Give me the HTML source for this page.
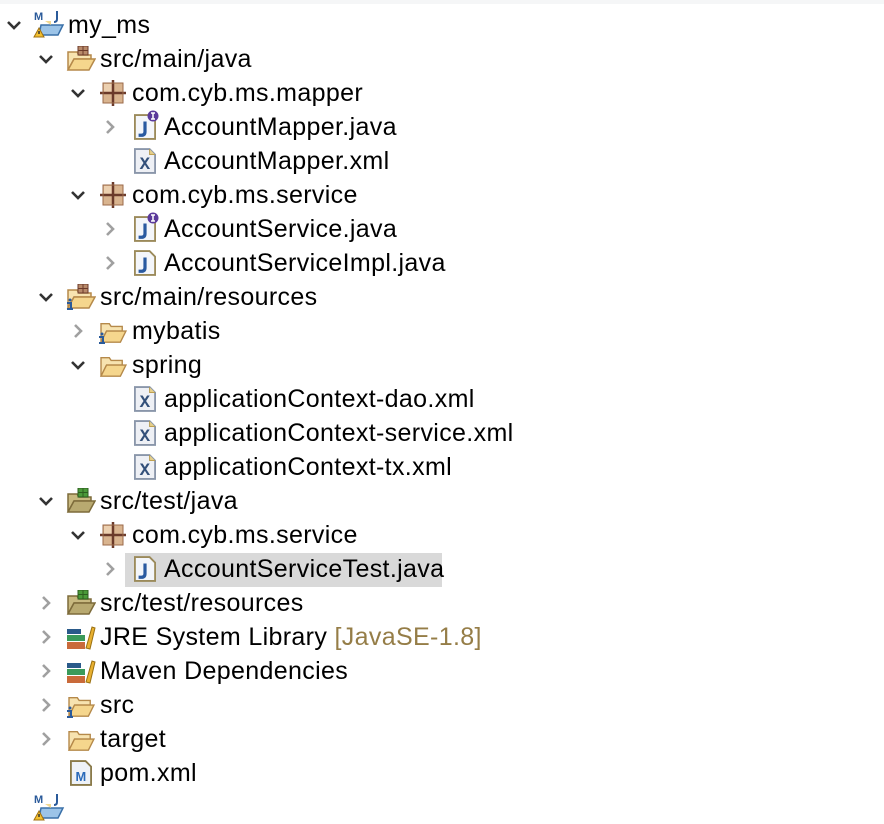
<!DOCTYPE html><html><head><style>
body{margin:0;width:884px;height:803px;background:#fff;position:relative;overflow:hidden;font-family:"Liberation Sans","DejaVu Sans",sans-serif;font-size:25px;letter-spacing:0.35px;color:#000}
.r{position:absolute;height:34px;line-height:34px;white-space:nowrap}
svg.i{position:absolute}
.g{color:#957d47}
</style></head><body>
<div style="position:absolute;left:0;top:0;width:884px;height:4px;background:#f5f6f7"></div>
<div style="position:absolute;left:125px;top:553px;width:317px;height:34px;background:#d9d9d9"></div>
<svg width="0" height="0" style="position:absolute">
<defs>
<symbol id="ad" viewBox="0 0 16 16"><path d="M2 5l6 6 6-6" fill="none" stroke="#333" stroke-width="2.6"/></symbol>
<symbol id="ar" viewBox="0 0 16 16"><path d="M5 2l6 6-6 6" fill="none" stroke="#a0a0a0" stroke-width="2.6"/></symbol>
<symbol id="fo" viewBox="0 0 30 26"><path d="M2 4h9l2 3h12v5H8L2 24z" fill="#f7e3b0" stroke="#b5894a" stroke-width="1.5"/><path d="M2 24l6-12h21l-6 12z" fill="#f5d68d" stroke="#b5894a" stroke-width="1.5"/></symbol>
<symbol id="fg" viewBox="0 0 30 26"><path d="M2 6h9l2 3h12v4H8L2 24z" fill="#c8b980" stroke="#7d6b3a" stroke-width="1.5"/><path d="M2 24l6-11h21l-6 11z" fill="#b8a970" stroke="#7d6b3a" stroke-width="1.5"/><rect x="12" y="0" width="10" height="9" fill="#4b9a3a" stroke="#2c5e1f"/><path d="M17 0v9M12 4.5h10" stroke="#2c5e1f"/></symbol>
<symbol id="fp" viewBox="0 0 30 26"><path d="M2 6h9l2 3h12v4H8L2 24z" fill="#f7e3b0" stroke="#b5894a" stroke-width="1.5"/><path d="M2 24l6-11h21l-6 11z" fill="#f5d68d" stroke="#b5894a" stroke-width="1.5"/><rect x="12" y="0" width="10" height="9" fill="#b88a6a" stroke="#6b3a2a"/><path d="M17 0v9M12 4.5h10" stroke="#6b3a2a"/></symbol>
<symbol id="in" viewBox="0 0 8 12"><circle cx="4" cy="2" r="1.5" fill="#2a5a9a"/><path d="M1 5h4v6M1 11h6" stroke="#2a5a9a" stroke-width="2" fill="none"/></symbol>
<symbol id="pk" viewBox="0 0 26 26"><rect x="3" y="3" width="20" height="20" fill="#d9b48f"/><rect x="4" y="4" width="8" height="8" fill="#ecd0b0"/><path d="M13 0v26M0 13h26" stroke="#6b3a2a" stroke-width="2.5"/><rect x="3" y="3" width="20" height="20" fill="none" stroke="#9b6a4a"/></symbol>
<symbol id="jf" viewBox="0 0 24 28"><path d="M1 1h16l6 6v20H1z" fill="#f4f6fa" stroke="#9b8a5a" stroke-width="2"/><path d="M12 8v11q0 4-4 4H5" fill="none" stroke="#2a5aa0" stroke-width="3.5"/></symbol>
<symbol id="xf" viewBox="0 0 24 28"><path d="M1 1h16l6 6v20H1z" fill="#eef0f5" stroke="#8a96aa" stroke-width="2"/><path d="M17 1v6h6" fill="#e6cf8a" stroke="#b89a4a"/><text x="12" y="23" font-family="Liberation Mono" font-size="19" font-weight="bold" fill="#33507a" text-anchor="middle">X</text></symbol>
<symbol id="ib" viewBox="0 0 12 12"><circle cx="6" cy="6" r="5.5" fill="#5b3a9a"/><path d="M4 3h4M6 3v6M4 9h4" stroke="#fff" stroke-width="1.5"/></symbol>
<symbol id="lb" viewBox="0 0 30 24"><rect x="1" y="16" width="18" height="7" fill="#c96a3a"/><rect x="1" y="9" width="18" height="6" fill="#3a9a5a"/><rect x="1" y="3" width="14" height="5" fill="#2a5a8a"/><path d="M20 22L26 1l3 1-5 21z" fill="#e8b030" stroke="#9a7010"/></symbol>
<symbol id="pm" viewBox="0 0 24 28"><path d="M1 1h16l6 6v20H1z" fill="#eef2f8" stroke="#8a7a4a" stroke-width="2"/><text x="12" y="23" font-family="Liberation Sans" font-size="14" font-weight="bold" fill="#2a6aba" text-anchor="middle">M</text></symbol>
<symbol id="pj" viewBox="0 0 32 32"><text x="1" y="11" font-family="Liberation Sans" font-size="11" font-weight="bold" fill="#2a5a9a">M</text><path d="M24 2v8q0 3-3 3" fill="none" stroke="#2a5a9a" stroke-width="2"/><path d="M8 16h22l-5 10H6z" fill="#9cc4e8" stroke="#3a70a8" stroke-width="1.5"/><path d="M12 12h6v4" fill="#f2d890"/><path d="M6 19l5 9H1z" fill="#f2c030" stroke="#a07010"/><path d="M6 22v3" stroke="#333" stroke-width="1.5"/></symbol>
</defs></svg>

<svg class="i" style="left:6px;top:17px" width="16" height="16"><use href="#ad"/></svg>
<svg class="i" style="left:32px;top:9px" width="34" height="32"><use href="#pj"/></svg>
<div class="r" style="left:68px;top:8px">my_ms</div>

<svg class="i" style="left:38px;top:51px" width="16" height="16"><use href="#ad"/></svg>
<svg class="i" style="left:66px;top:46px" width="30" height="26"><use href="#fp"/></svg>
<div class="r" style="left:100px;top:42px">src/main/java</div>

<svg class="i" style="left:70px;top:85px" width="16" height="16"><use href="#ad"/></svg>
<svg class="i" style="left:100px;top:80px" width="26" height="26"><use href="#pk"/></svg>
<div class="r" style="left:132px;top:76px">com.cyb.ms.mapper</div>

<svg class="i" style="left:102px;top:119px" width="16" height="16"><use href="#ar"/></svg>
<svg class="i" style="left:134px;top:113px" width="22" height="28"><use href="#jf"/></svg>
<svg class="i" style="left:147px;top:110px" width="12" height="12"><use href="#ib"/></svg>
<div class="r" style="left:164px;top:110px">AccountMapper.java</div>

<svg class="i" style="left:134px;top:147px" width="22" height="28"><use href="#xf"/></svg>
<div class="r" style="left:164px;top:144px">AccountMapper.xml</div>

<svg class="i" style="left:70px;top:187px" width="16" height="16"><use href="#ad"/></svg>
<svg class="i" style="left:100px;top:182px" width="26" height="26"><use href="#pk"/></svg>
<div class="r" style="left:132px;top:178px">com.cyb.ms.service</div>

<svg class="i" style="left:102px;top:221px" width="16" height="16"><use href="#ar"/></svg>
<svg class="i" style="left:134px;top:215px" width="22" height="28"><use href="#jf"/></svg>
<svg class="i" style="left:147px;top:212px" width="12" height="12"><use href="#ib"/></svg>
<div class="r" style="left:164px;top:212px">AccountService.java</div>

<svg class="i" style="left:102px;top:255px" width="16" height="16"><use href="#ar"/></svg>
<svg class="i" style="left:134px;top:249px" width="22" height="28"><use href="#jf"/></svg>
<div class="r" style="left:164px;top:246px">AccountServiceImpl.java</div>

<svg class="i" style="left:38px;top:289px" width="16" height="16"><use href="#ad"/></svg>
<svg class="i" style="left:66px;top:284px" width="30" height="26"><use href="#fp"/></svg>
<svg class="i" style="left:66px;top:298px" width="8" height="12"><use href="#in"/></svg>
<div class="r" style="left:100px;top:280px">src/main/resources</div>

<svg class="i" style="left:70px;top:323px" width="16" height="16"><use href="#ar"/></svg>
<svg class="i" style="left:98px;top:320px" width="30" height="24"><use href="#fo"/></svg>
<svg class="i" style="left:98px;top:332px" width="8" height="12"><use href="#in"/></svg>
<div class="r" style="left:132px;top:314px">mybatis</div>

<svg class="i" style="left:70px;top:357px" width="16" height="16"><use href="#ad"/></svg>
<svg class="i" style="left:98px;top:354px" width="30" height="24"><use href="#fo"/></svg>
<div class="r" style="left:132px;top:348px">spring</div>

<svg class="i" style="left:134px;top:385px" width="22" height="28"><use href="#xf"/></svg>
<div class="r" style="left:164px;top:382px">applicationContext-dao.xml</div>
<svg class="i" style="left:134px;top:419px" width="22" height="28"><use href="#xf"/></svg>
<div class="r" style="left:164px;top:416px">applicationContext-service.xml</div>
<svg class="i" style="left:134px;top:453px" width="22" height="28"><use href="#xf"/></svg>
<div class="r" style="left:164px;top:450px">applicationContext-tx.xml</div>

<svg class="i" style="left:38px;top:493px" width="16" height="16"><use href="#ad"/></svg>
<svg class="i" style="left:66px;top:488px" width="30" height="26"><use href="#fg"/></svg>
<div class="r" style="left:100px;top:484px">src/test/java</div>

<svg class="i" style="left:70px;top:527px" width="16" height="16"><use href="#ad"/></svg>
<svg class="i" style="left:100px;top:522px" width="26" height="26"><use href="#pk"/></svg>
<div class="r" style="left:132px;top:518px">com.cyb.ms.service</div>

<svg class="i" style="left:102px;top:561px" width="16" height="16"><use href="#ar"/></svg>
<svg class="i" style="left:134px;top:555px" width="22" height="28"><use href="#jf"/></svg>
<div class="r" style="left:164px;top:552px">AccountServiceTest.java</div>

<svg class="i" style="left:38px;top:595px" width="16" height="16"><use href="#ar"/></svg>
<svg class="i" style="left:66px;top:590px" width="30" height="26"><use href="#fg"/></svg>
<div class="r" style="left:100px;top:586px">src/test/resources</div>

<svg class="i" style="left:38px;top:629px" width="16" height="16"><use href="#ar"/></svg>
<svg class="i" style="left:66px;top:626px" width="30" height="24"><use href="#lb"/></svg>
<div class="r" style="left:100px;top:620px">JRE System Library <span class="g">[JavaSE-1.8]</span></div>

<svg class="i" style="left:38px;top:663px" width="16" height="16"><use href="#ar"/></svg>
<svg class="i" style="left:66px;top:660px" width="30" height="24"><use href="#lb"/></svg>
<div class="r" style="left:100px;top:654px">Maven Dependencies</div>

<svg class="i" style="left:38px;top:697px" width="16" height="16"><use href="#ar"/></svg>
<svg class="i" style="left:66px;top:694px" width="30" height="24"><use href="#fo"/></svg>
<svg class="i" style="left:66px;top:706px" width="8" height="12"><use href="#in"/></svg>
<div class="r" style="left:100px;top:688px">src</div>

<svg class="i" style="left:38px;top:731px" width="16" height="16"><use href="#ar"/></svg>
<svg class="i" style="left:66px;top:728px" width="30" height="24"><use href="#fo"/></svg>
<div class="r" style="left:100px;top:722px">target</div>

<svg class="i" style="left:70px;top:759px" width="22" height="28"><use href="#pm"/></svg>
<div class="r" style="left:100px;top:756px">pom.xml</div>

<svg class="i" style="left:32px;top:792px" width="34" height="32"><use href="#pj"/></svg>
</body></html>
